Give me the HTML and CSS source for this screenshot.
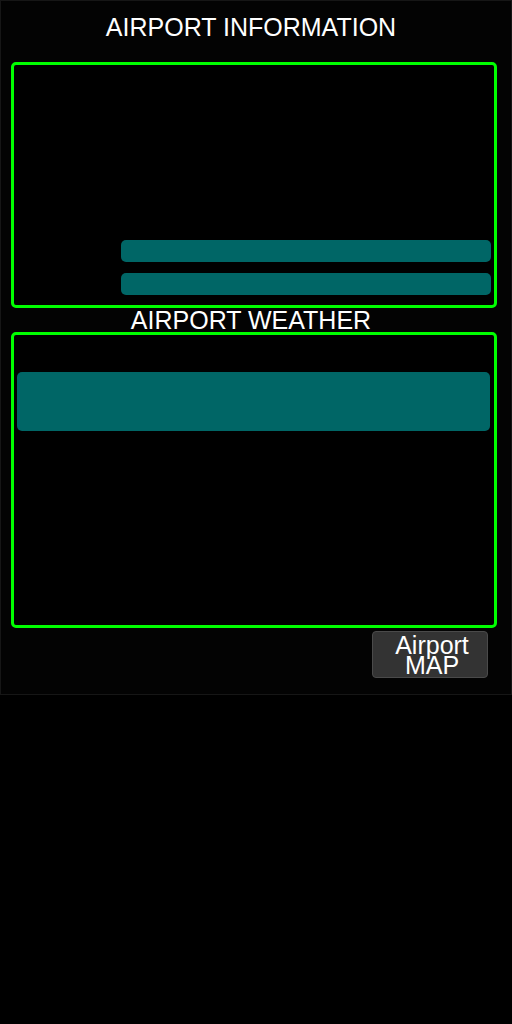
FILE: index.html
```html
<!DOCTYPE html>
<html>
<head>
<meta charset="utf-8">
<link rel="stylesheet" href="styles.css">
</head>
<body>
<div class="app">
  <h1 class="title">AIRPORT INFORMATION</h1>
  <section class="panel panel-info">
    <div class="bar"></div>
    <div class="bar"></div>
  </section>
  <h2 class="subtitle">AIRPORT WEATHER</h2>
  <section class="panel panel-weather">
    <div class="weather-bar"></div>
  </section>
  <div class="actions">
    <button class="map-btn">Airport<br>MAP</button>
  </div>
</div>
</body>
</html>
```
FILE: styles.css
```css
html, body {
  margin: 0;
  padding: 0;
  background: #000;
}
body {
  font-family: "Liberation Sans", Arial, sans-serif;
  color: #fff;
}
.app {
  width: 512px;
  height: 695px;
  box-sizing: border-box;
  border: 1px solid #161616;
  background: #030303;
  padding: 12px 14px 0 10px;
  display: flex;
  flex-direction: column;
}
.title {
  margin: 0 0 21px 0;
  width: 480px;
  font-size: 25px;
  line-height: 28px;
  font-weight: normal;
  text-align: center;
}
.panel {
  width: 486px;
  box-sizing: border-box;
  border: 3px solid #00ff00;
  border-radius: 5px;
  background: #000;
  display: flex;
  flex-direction: column;
}
.panel-info {
  height: 246px;
  justify-content: flex-end;
  gap: 11px;
  padding: 0 3px 10px 107px;
}
.bar {
  height: 22px;
  background: #006666;
  border-radius: 5px;
}
.subtitle {
  margin: 0;
  width: 480px;
  font-size: 25px;
  line-height: 24px;
  font-weight: normal;
  text-align: center;
}
.panel-weather {
  height: 296px;
  padding: 37px 4px 0 3px;
}
.weather-bar {
  height: 59px;
  background: #006666;
  border-radius: 5px;
}
.actions {
  width: 486px;
  display: flex;
  justify-content: flex-end;
  padding-top: 3px;
}
.map-btn {
  width: 116px;
  height: 47px;
  margin-right: 9px;
  box-sizing: border-box;
  background: #333;
  border: 1px solid #4a4a4a;
  border-radius: 4px;
  color: #fff;
  font-family: "Liberation Sans", Arial, sans-serif;
  font-size: 25px;
  line-height: 20px;
  padding: 1px 0 0 4px;
  text-align: center;
}
```
